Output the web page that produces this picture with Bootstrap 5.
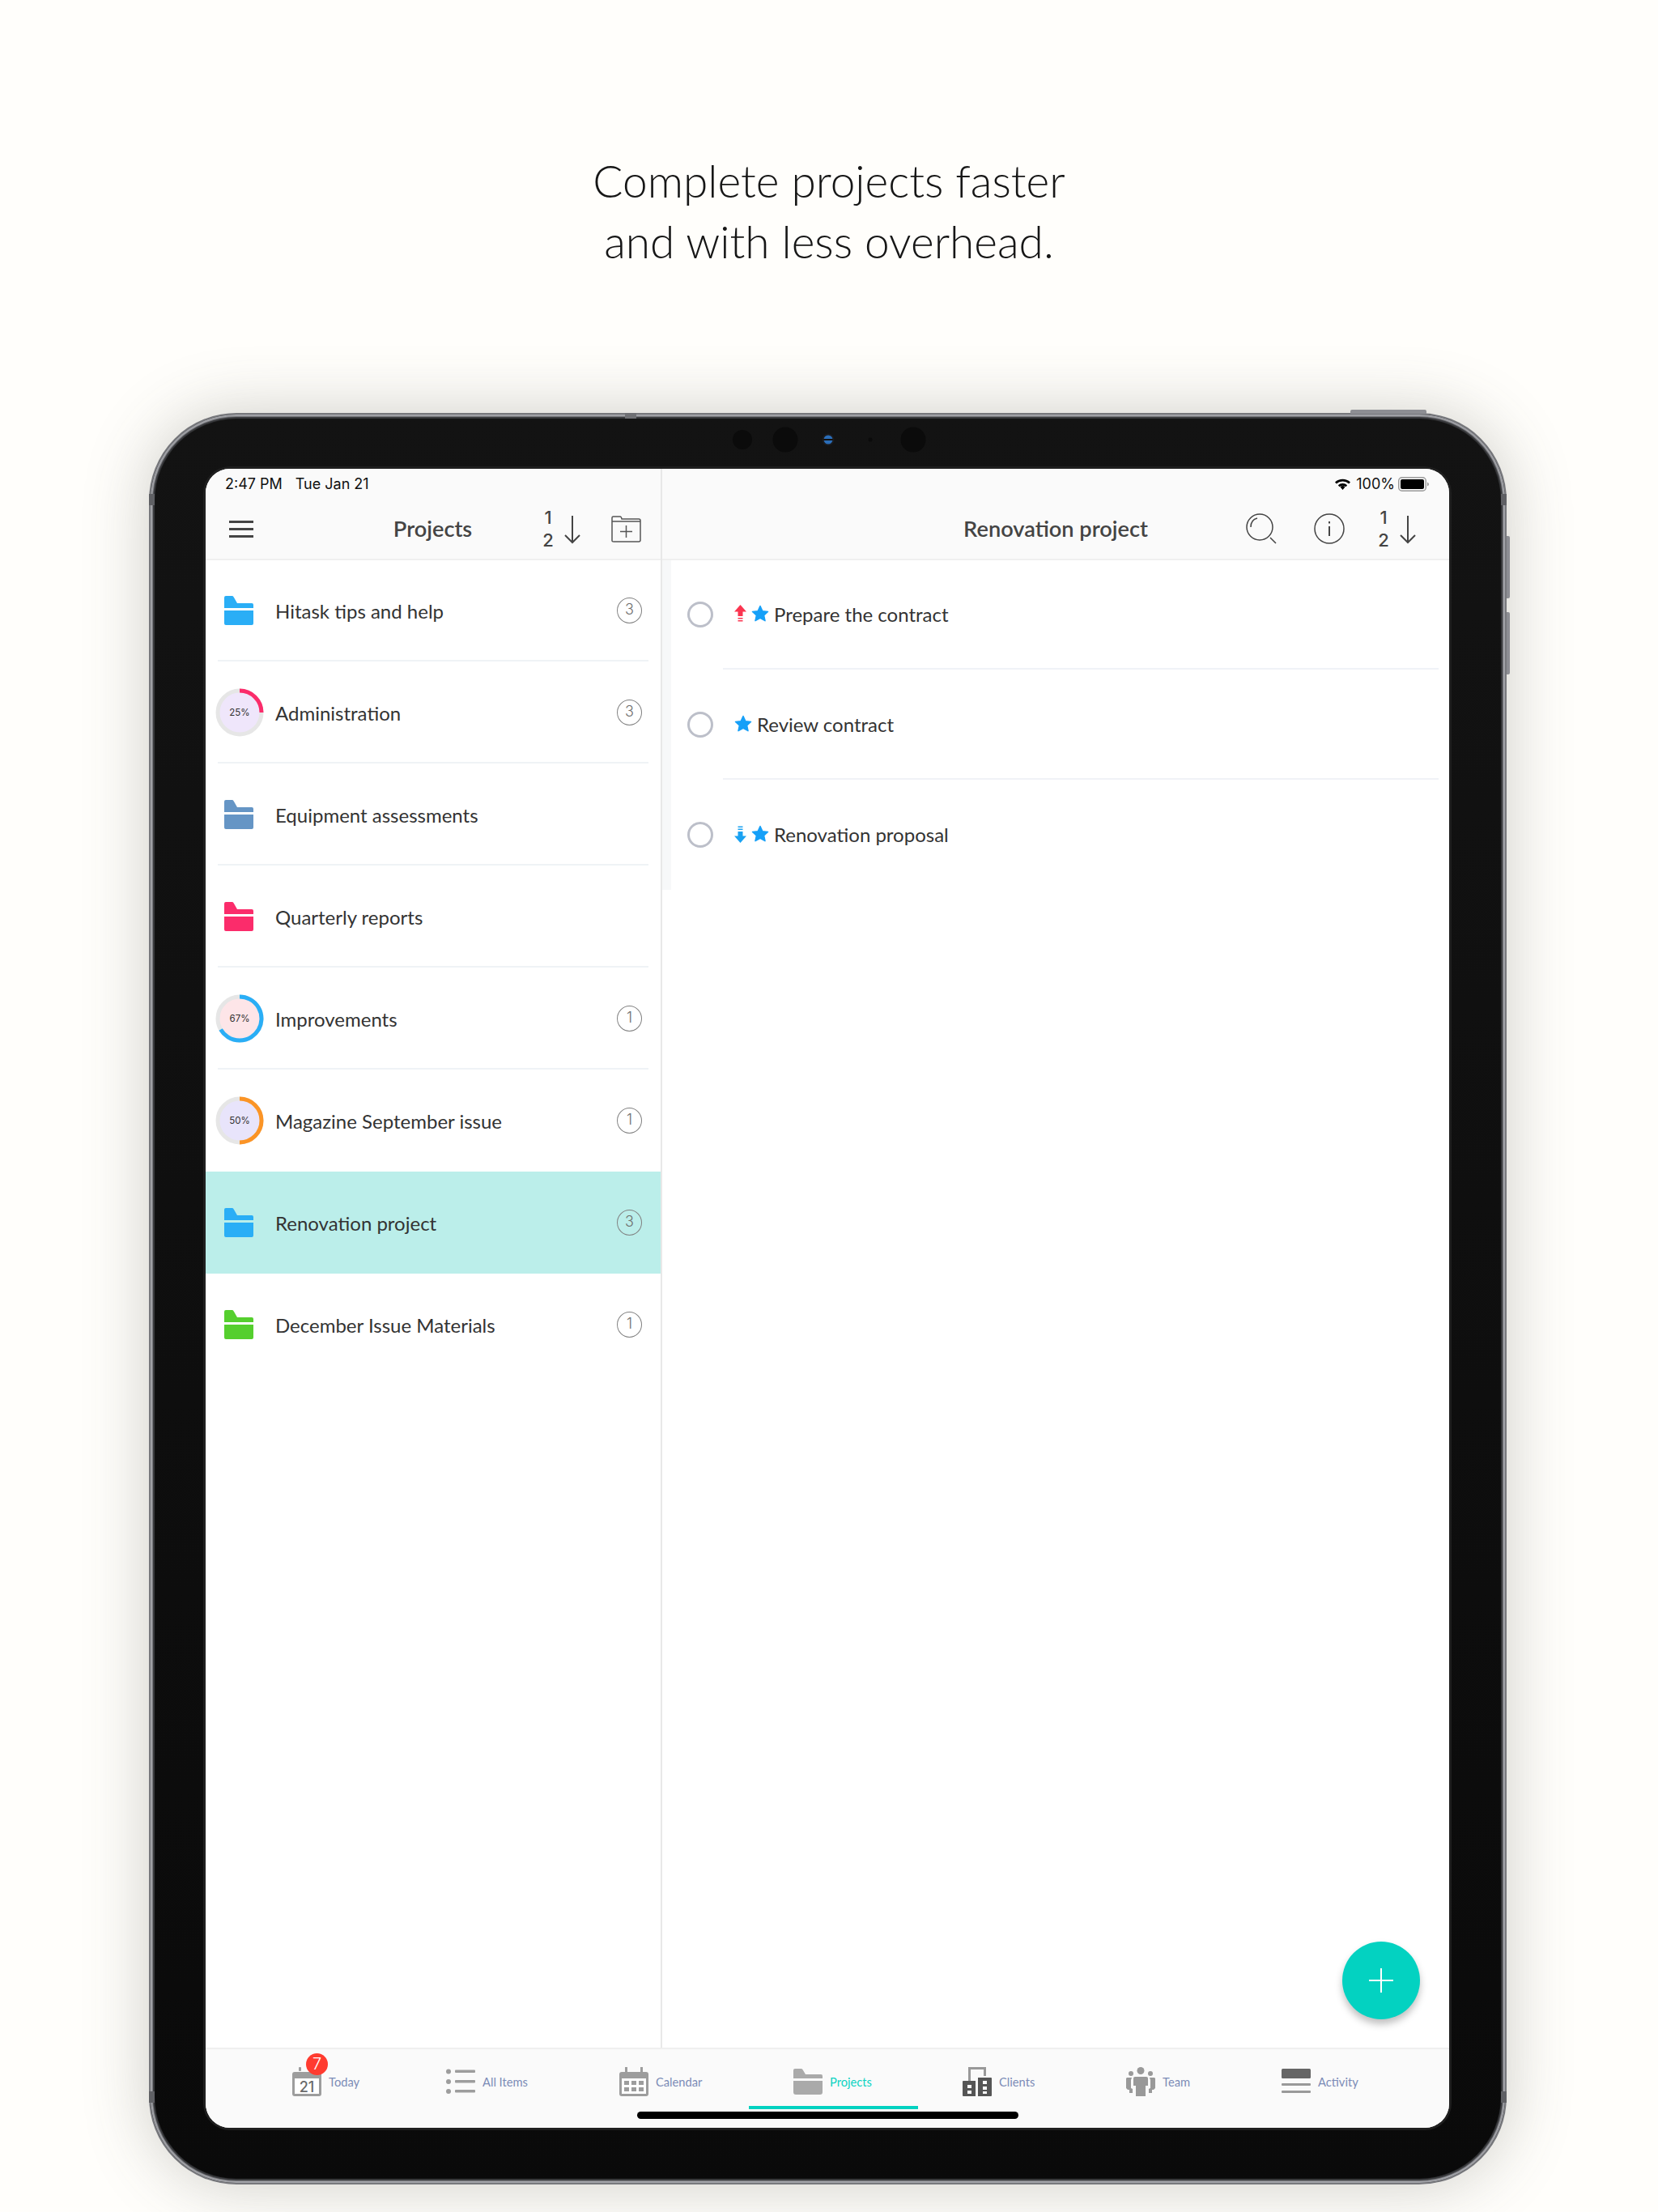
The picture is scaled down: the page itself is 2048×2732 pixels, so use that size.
<!doctype html>
<html lang="en">
<head>
<meta charset="utf-8">
<title>Projects</title>
<link href="https://cdn.jsdelivr.net/npm/bootstrap@5.3.0/dist/css/bootstrap.min.css" rel="stylesheet">
<style>
html,body{height:2732px;margin:0;overflow:hidden}
body{background:#fffefb;font-family:"Lato","Liberation Sans",sans-serif;color:#333}
.hero{height:510px;padding-top:186px;text-align:center;font-weight:300;font-size:55px;line-height:75px;color:#161616}
.ipad{position:relative;margin-left:184px;width:1677px;height:2188px;border-radius:108px;background:linear-gradient(#131313,#0a0a0a);border:2px solid #77787c;padding:67px 69px 68px 68px;box-shadow:inset 0 0 0 2px #a0a1a6,inset 0 0 0 3px #77787c,inset 0 0 1px 5px #3b3c3f,0 0 80px rgba(80,80,70,.28)}
.hw{position:absolute;background:#8d8e93;display:block}
.hw-top{top:-6px;left:1482px;width:94px;height:5px;border-radius:2px 2px 0 0}
.hw-notch{top:-2px;left:586px;width:14px;height:7px;background:#6f7074}
.hw-v1,.hw-v2{right:-6px;width:4px;height:77px;border-radius:0 2px 2px 0}
.hw-v1{top:150px}
.hw-v2{top:244px}
.band{width:7px;height:14px;background:#5f6064}
.band-a{left:-2px;top:98px}
.band-b{right:-2px;top:98px}
.band-c{right:-2px;top:2071px}
.band-d{left:-2px;top:2071px}
.lens{position:absolute;display:block;border-radius:50%;background:#0b0b0b;transform:translate(-50%,-50%);top:31px}
.lens-1{left:731px;width:24px;height:24px}
.lens-2{left:784px;width:31px;height:31px}
.lens-3{left:837px;width:11px;height:11px;background:linear-gradient(#2a6db8 42%,#111 42% 58%,#2a6db8 58%);box-shadow:0 0 0 2px #1b1b1d}
.lens-4{left:889px;width:5px;height:5px}
.lens-5{left:942px;width:31px;height:31px}
.screen{height:100%;border-radius:30px;background:#fff;overflow:hidden;position:relative;box-shadow:0 0 0 3px #1f1f1f}
.panes{height:1950px}
.leftpane{width:564px;border-right:2px solid #e8e8e8;flex:none}
.bar{height:113px;background:#fafafa;border-bottom:2px solid #efefef;position:relative;flex:none}
.status{height:35px;padding-top:8px;font-family:"Inter","Liberation Sans",sans-serif;font-size:18px;line-height:22px;color:#111}
.status-r{padding-top:2px;padding-right:23px}
.wifi{margin-right:2px}
.navrow{height:76px;padding:2px 24px 0 29px}
.rnav{padding:2px 40px 0}
.side{flex:1 1 0}
.burger{margin-top:1px}
.ttl{font-size:27.200px;font-weight:600;color:#444;line-height:32px;margin-right:6px}
.rnav .ttl{margin-right:0}
.sorter{width:50px;height:58px;position:relative;font-family:"Inter","Liberation Sans",sans-serif;font-size:22px;font-weight:500;color:#444;line-height:28px;margin-right:37px;padding-top:1px;flex:none}
.rnav .sorter{margin-right:0}
.sorter span{display:block;width:18px;text-align:center}
.sorter svg{position:absolute;left:29px;top:12px}
.srch{margin-right:46px}
.info{margin-right:39px}
.prow{height:126px;padding:0 23px 0 23px;position:relative;flex:none}
.bar + .prow{margin-top:-1px}
.prow::after{content:"";position:absolute;left:15px;right:15px;bottom:0;height:2px;background:#eff3f6}
.prow.sel{background:#bbeeea}
.prow.sel::after,.prow.nosep::after{display:none}
.ficon{width:36px;height:36px;margin-right:27px;flex:none}
.pname{font-size:24px;color:#333;flex:1;line-height:30px;padding-top:1px}
.cnt{width:31px;height:32px;border:1.500px solid #808080;border-radius:50%;font-size:18px;line-height:28px;text-align:center;color:#6e6e6e;flex:none;font-family:"Inter","Liberation Sans",sans-serif;font-weight:300;margin-top:-1px}
.prog{width:60px;height:60px;margin:0 14px 0 -11px;flex:none}
.prog text{font-family:"Inter","Liberation Sans",sans-serif;font-size:11.500px;fill:#333}
.rightpane{flex:1;min-width:0}
.tasks{width:100%;border-left:11px solid #f7f8f9;margin-top:-1px}
.trow{height:136px;position:relative;padding-left:20px}
.trow::after{content:"";position:absolute;left:64px;right:13px;bottom:0;height:2px;background:#f0f2f7}
.trow.last::after{display:none}
.radio{width:32px;height:32px;border:3px solid #bcbfc9;border-radius:50%;flex:none;margin-right:26px}
.tname{font-size:24px;color:#333;line-height:30px;margin-left:6px;padding-bottom:1px}
.star{margin-left:6px;margin-top:-3px}
.trow>svg:first-of-type{margin-top:-3px}
.trow>.star:first-of-type{margin-left:0}
.tabs{height:99px;background:#fafafa;border-top:2px solid #efefef;position:relative;padding:20px 0 0 107px}
.tabi{position:relative;height:40px;display:flex;align-items:center;flex:none}
.tabi small{font-size:14.700px;color:#7c8cb7;margin-left:9px;line-height:20px}
.tabi.on small{color:#0cd3c2}
.tabi:nth-child(1){width:190px}
.tabi:nth-child(2){width:214px}
.tabi:nth-child(3){width:215px}
.tabi:nth-child(4){width:209px}
.tabi:nth-child(5){width:202px}
.tabi:nth-child(6){width:192px}
.tabu{position:absolute;left:-55px;width:209px;height:4px;top:50px;background:#03d2c1}
.homeb{position:absolute;left:533px;width:471px;height:9px;top:77px;background:#000;border-radius:5px}
.bub{position:absolute;left:17px;top:-15px;width:27px;height:27px;border-radius:50%;background:#ff3b30;color:#fff;font-size:20px;line-height:27px;text-align:center;font-family:"Inter","Liberation Sans",sans-serif;font-weight:300}
.fab{position:absolute;left:1404px;top:1819px;width:96px;height:96px;border-radius:50%;background:#03d2c1;box-shadow:0 6px 10px rgba(0,0,0,.25)}
</style>
</head>
<body>
<header class="hero">Complete projects faster<br>and with less overhead.</header>
<div class="ipad">
  <i class="hw hw-top"></i><i class="hw hw-notch"></i><i class="hw hw-v1"></i><i class="hw hw-v2"></i>
  <i class="hw band band-a"></i><i class="hw band band-b"></i><i class="hw band band-c"></i><i class="hw band band-d"></i>
  <i class="lens lens-1"></i><i class="lens lens-2"></i><i class="lens lens-3"></i><i class="lens lens-4"></i><i class="lens lens-5"></i>
  <div class="screen">
    <div class="panes d-flex">
      <section class="leftpane d-flex flex-column">
        <div class="bar">
          <div class="status ps-4 d-flex gap-3"><span>2:47 PM</span><span>Tue Jan 21</span></div>
          <div class="navrow d-flex align-items-center">
            <div class="side d-flex"><svg class="burger" width="30" height="21" viewBox="0 0 30 21"><path d="M0 1.500h30M0 10.500h30M0 19.500h30" stroke="#444" stroke-width="3"/></svg></div>
            <div class="ttl text-center">Projects</div>
            <div class="side d-flex justify-content-end align-items-center">
              <div class="sorter"><span>1</span><span>2</span><svg width="20" height="36" viewBox="0 0 20 36" fill="none" stroke="#444" stroke-width="2"><path d="M10 1v33M1 25l9 9 9-9"/></svg></div>
              <svg width="37" height="33" viewBox="0 0 37 33" fill="none" stroke="#555" stroke-width="1.500"><path d="M1 31V2.500Q1 1 2.500 1H11q1.500 0 2 3h21q2 0 2 2v24q0 2-2 2H3q-2 0-2-1zM1 7h35M18.500 12v15M11 19.500h15"/></svg>
            </div>
          </div>
        </div>
        <div class="prow d-flex align-items-center"><svg class="ficon" viewBox="0 0 36 36"><use href="#fld" fill="#2aaef6"/></svg><span class="pname">Hitask tips and help</span><span class="cnt">3</span></div>
        <div class="prow d-flex align-items-center"><svg class="prog" viewBox="0 0 60 60"><circle cx="30" cy="30" r="27" fill="#efe6fb" stroke="#e6e6e6" stroke-width="5"/><path d="M30 3A27 27 0 0 1 57 30" fill="none" stroke="#fb2c6b" stroke-width="5"/><text x="30" y="34" text-anchor="middle">25%</text></svg><span class="pname">Administration</span><span class="cnt">3</span></div>
        <div class="prow d-flex align-items-center"><svg class="ficon" viewBox="0 0 36 36"><use href="#fld" fill="#6595c5"/></svg><span class="pname">Equipment assessments</span></div>
        <div class="prow d-flex align-items-center"><svg class="ficon" viewBox="0 0 36 36"><use href="#fld" fill="#fb2c6b"/></svg><span class="pname">Quarterly reports</span></div>
        <div class="prow d-flex align-items-center"><svg class="prog" viewBox="0 0 60 60"><circle cx="30" cy="30" r="27" fill="#fde5e8" stroke="#e6e6e6" stroke-width="5"/><path d="M30 3A27 27 0 1 1 6.600 43.500" fill="none" stroke="#2aaef6" stroke-width="5"/><text x="30" y="34" text-anchor="middle">67%</text></svg><span class="pname">Improvements</span><span class="cnt">1</span></div>
        <div class="prow d-flex align-items-center nosep"><svg class="prog" viewBox="0 0 60 60"><circle cx="30" cy="30" r="27" fill="#e8e4fb" stroke="#e6e6e6" stroke-width="5"/><path d="M30 3A27 27 0 0 1 30 57" fill="none" stroke="#fb9426" stroke-width="5"/><text x="30" y="34" text-anchor="middle">50%</text></svg><span class="pname">Magazine September issue</span><span class="cnt">1</span></div>
        <div class="prow sel d-flex align-items-center"><svg class="ficon" viewBox="0 0 36 36"><use href="#fld" fill="#2aaef6"/></svg><span class="pname">Renovation project</span><span class="cnt">3</span></div>
        <div class="prow nosep d-flex align-items-center"><svg class="ficon" viewBox="0 0 36 36"><use href="#fld" fill="#55cf2e"/></svg><span class="pname">December Issue Materials</span><span class="cnt">1</span></div>
      </section>
      <section class="rightpane d-flex flex-column">
        <div class="bar">
          <div class="status status-r d-flex justify-content-end align-items-center gap-1">
            <svg class="wifi" width="21" height="15" viewBox="0 0 21 15"><path d="M10.500 15l-3-3.600a4.500 4.500 0 0 1 6 0zM1 5.500a14 14 0 0 1 19 0l-1.800 2a11.500 11.500 0 0 0-15.400 0zM4.800 9.300a8.500 8.500 0 0 1 11.400 0l-1.700 1.900a6 6 0 0 0-8 0z" fill="#000"/></svg>
            <span>100%</span>
            <svg width="40" height="18" viewBox="0 0 40 18"><rect x=".75" y=".75" width="33.500" height="16.500" rx="4" fill="none" stroke="#999" stroke-width="1.500"/><rect x="3" y="3" width="29" height="12" rx="2" fill="#000"/><path d="M36 6.500q2 1 2 2.500t-2 2.500z" fill="#999"/></svg>
          </div>
          <div class="navrow rnav d-flex align-items-center">
            <div class="side"></div>
            <div class="ttl text-center">Renovation project</div>
            <div class="side d-flex justify-content-end align-items-center">
              <svg class="srch" width="38" height="38" viewBox="0 0 38 38" fill="none" stroke="#444" stroke-width="1.500"><circle cx="17" cy="17" r="16"/><path d="M30 30l7 7M6 17q0-9 8-11"/></svg>
              <svg class="info" width="38" height="38" viewBox="0 0 38 38" fill="none" stroke="#444" stroke-width="1.500"><circle cx="19" cy="19" r="18"/><path d="M19 16v12" stroke-width="2"/><path d="M19 10v2.500" stroke-width="2"/></svg>
              <div class="sorter"><span>1</span><span>2</span><svg width="20" height="36" viewBox="0 0 20 36" fill="none" stroke="#444" stroke-width="2"><path d="M10 1v33M1 25l9 9 9-9"/></svg></div>
            </div>
          </div>
        </div>
        <div class="tasks">
          <div class="trow d-flex align-items-center"><i class="radio"></i><svg width="15" height="22" viewBox="0 0 15 22"><path d="M7.500 0L15 8.500h-4.500V14h-6V8.500H0z" fill="#fb3550"/><path d="M4.500 16h6v1.500h-6zM4.500 19h6v1.500h-6z" fill="#fb3550"/></svg><svg class="star" width="22" height="22" viewBox="0 0 22 22"><use href="#star"/></svg><span class="tname">Prepare the contract</span></div>
          <div class="trow d-flex align-items-center"><i class="radio"></i><svg class="star" width="22" height="22" viewBox="0 0 22 22"><use href="#star"/></svg><span class="tname">Review contract</span></div>
          <div class="trow last d-flex align-items-center"><i class="radio"></i><svg width="15" height="22" viewBox="0 0 15 22"><path d="M7.500 22L0 13.500h4.500V8h6v5.500H15z" fill="#1aa2f2"/><path d="M4.500 1.500h6V3h-6zM4.500 4.500h6V6h-6z" fill="#1aa2f2"/></svg><svg class="star" width="22" height="22" viewBox="0 0 22 22"><use href="#star"/></svg><span class="tname">Renovation proposal</span></div>
        </div>
      </section>
    </div>
    <nav class="tabs d-flex">
      <div class="tabi"><svg width="36" height="36" viewBox="0 0 36 36"><use href="#cal"/><text x="18" y="31" text-anchor="middle" font-size="18" font-weight="500" fill="#6b6b6b" font-family="Inter,Liberation Sans,sans-serif">21</text></svg><small>Today</small><span class="bub">7</span></div>
      <div class="tabi"><svg width="36" height="32" viewBox="0 0 36 32" fill="#9d9d9d"><circle cx="3" cy="3.500" r="3"/><circle cx="3" cy="16" r="3"/><circle cx="3" cy="28" r="3"/><rect x="11" y="1.500" width="25" height="3.500" rx="1"/><rect x="11" y="14" width="25" height="3.500" rx="1"/><rect x="11" y="26" width="25" height="3.500" rx="1"/></svg><small>All Items</small></div>
      <div class="tabi"><svg width="36" height="36" viewBox="0 0 36 36"><use href="#cal2"/></svg><small>Calendar</small></div>
      <div class="tabi on"><svg width="36" height="32" viewBox="0 0 36 32"><path d="M0 2q0-2 2-2h8q1 0 2 2l3 5h19q2 0 2 2v3H0zM0 15h36v14q0 3-3 3H3q-3 0-3-3z" fill="#aaa"/></svg><small>Projects</small><span class="tabu"></span></div>
      <div class="tabi"><svg width="36" height="36" viewBox="0 0 36 36"><path d="M8.500 17V1.500h19V11" fill="none" stroke="#999" stroke-width="3"/><path d="M1 36q-1 0-1-1V18q0-1 1-1h15v19zM19 36V13h16q1 0 1 1v21q0 1-1 1z" fill="#555"/><path d="M6 22h5v4H6zM6 29h5v4H6zM25 17h5v4h-5zM25 24h5v4h-5zM25 30h5v3h-5z" fill="#fafafa"/></svg><small>Clients</small></div>
      <div class="tabi"><svg width="36" height="36" viewBox="0 0 36 36" fill="#999"><circle cx="18" cy="4.500" r="4.500"/><circle cx="6" cy="8" r="3"/><circle cx="30" cy="8" r="3"/><path d="M11 12h14q2 0 2 2v9h-3v13H12V23H9v-9q0-2 2-2z"/><path d="M1 13h6l-1 3v10l2 1v5H4v-4H2l-2-2V14zM35 13h-6l1 3v10l-2 1v5h4v-4h2l2-2V14z"/></svg><small>Team</small></div>
      <div class="tabi"><svg width="36" height="32" viewBox="0 0 36 32"><rect width="36" height="12" rx="1.500" fill="#666"/><rect y="18" width="36" height="3" rx="1" fill="#999"/><rect y="27" width="36" height="3" rx="1" fill="#999"/></svg><small>Activity</small></div>
      <span class="homeb"></span>
    </nav>
    <div class="fab d-flex align-items-center justify-content-center"><svg width="30" height="30" viewBox="0 0 30 30"><path d="M15 0v30M0 15h30" stroke="#fff" stroke-width="2"/></svg></div>
  </div>
</div>
<svg width="0" height="0" class="d-block">
  <defs>
    <g id="fld"><path d="M0 2q0-2 2-2h8q1 0 2 2l4 7h18q2 0 2 2v4H0zM0 18h36v16q0 2-2 2H2q-2 0-2-2z"/></g>
    <path id="star" d="M11 1.500l2.900 6.300 6.600.7-4.900 4.500 1.400 6.700L11 16.300l-6 3.400 1.400-6.700L1.500 8.500l6.600-.7z" fill="#16a0f8" stroke="#16a0f8" stroke-width="1.500" stroke-linejoin="round"/>
    <g id="cal"><rect x="8" y="0" width="3" height="5" rx="1" fill="#9d9d9d"/><path d="M3 6h30q3 0 3 3v24q0 3-3 3H3q-3 0-3-3V9q0-3 3-3z" fill="#9d9d9d"/><rect x="3" y="14" width="30" height="19" fill="#fff"/></g>
    <g id="cal2" fill="#9d9d9d"><rect x="7" y="0" width="3" height="6"/><rect x="26" y="0" width="3" height="6"/><path d="M3 6h30q3 0 3 3v24q0 3-3 3H3q-3 0-3-3V9q0-3 3-3z"/><rect x="3" y="14" width="30" height="19" fill="#fff"/><path d="M6 17h6v5H6zM15 17h6v5h-6zM24 17h6v5h-6zM6 25h6v5H6zM15 25h6v5h-6zM24 25h6v5h-6z"/></g>
  </defs>
</svg>
<script src="https://cdn.jsdelivr.net/npm/bootstrap@5.3.0/dist/js/bootstrap.bundle.min.js"></script>
</body>
</html>
